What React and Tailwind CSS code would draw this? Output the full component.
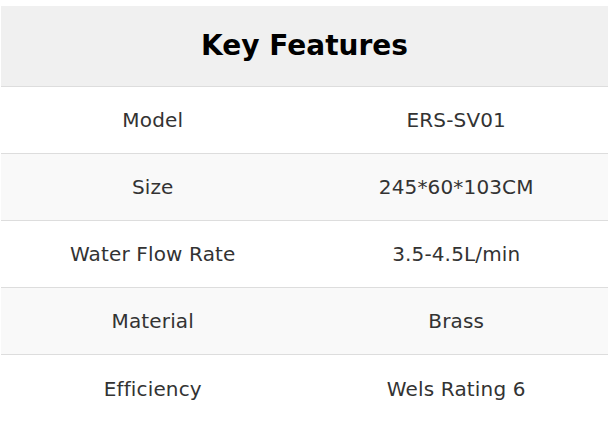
import React from "react";

const rows = [
  ["Model", "ERS-SV01"],
  ["Size", "245*60*103CM"],
  ["Water Flow Rate", "3.5-4.5L/min"],
  ["Material", "Brass"],
  ["Efficiency", "Wels Rating 6"],
];

export default function App() {
  return (
    <div className="min-h-screen bg-white pt-[6px] pl-px pr-[3px] font-['DejaVu_Sans',sans-serif]">
      <div className="w-[607px]">
        <div className="h-[81px] bg-[#f0f0f0] border-b border-[#dddddd] flex items-center justify-center">
          <h2 className="text-[28px] font-bold text-black">Key Features</h2>
        </div>
        {rows.map(([label, value], i) => (
          <div
            key={label}
            className={`grid grid-cols-2 h-[67px] border-b border-[#dddddd] last:border-b-0 text-[20px] tracking-[0.15px] text-[#333333] ${
              i % 2 === 1 ? "bg-[#f9f9f9]" : "bg-white"
            }`}
          >
            <div className="flex items-center justify-center">{label}</div>
            <div className="flex items-center justify-center">{value}</div>
          </div>
        ))}
      </div>
    </div>
  );
}
